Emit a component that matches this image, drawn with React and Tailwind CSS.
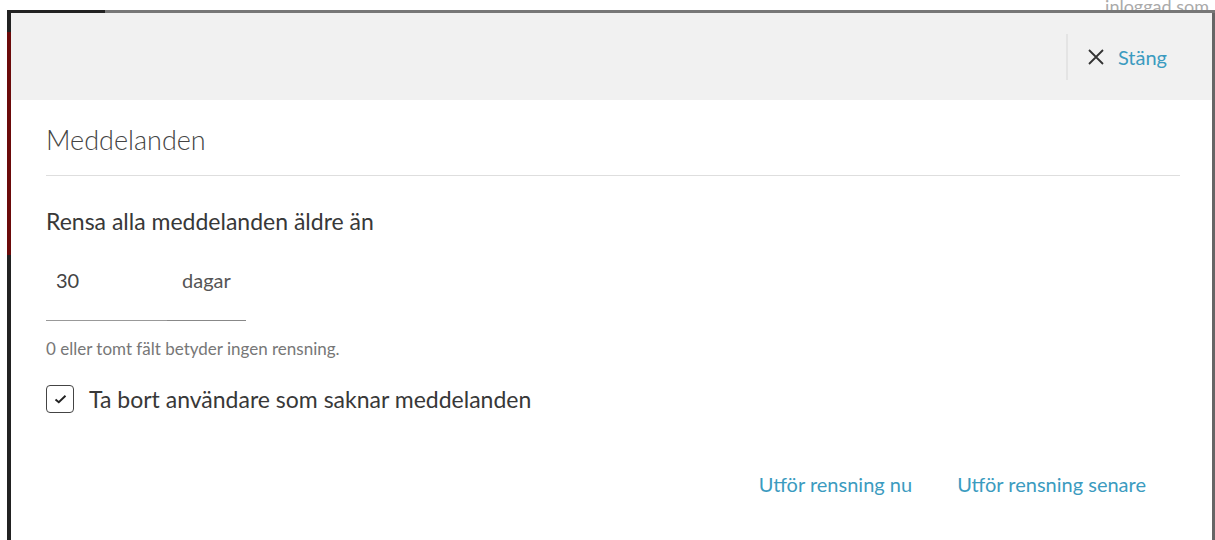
import { useState } from 'react';

// Blue used for the link-style buttons in the dialog
const LINK = 'text-[#3b9bc0]';

const CloseIcon = () => (
    <svg width="18" height="18" viewBox="0 0 18 18" className="text-[#333]">
        <path d="M2 2 L16 16 M16 2 L2 16" stroke="currentColor" strokeWidth="1.8" fill="none" />
    </svg>
);

const Checkbox = ({ checked, onChange }) => (
    <button
        type="button"
        onClick={onChange}
        className="w-[28px] h-[28px] rounded-[4px] border-[1.5px] border-[#444] flex items-center justify-center shrink-0"
    >
        {checked && (
            <svg width="13" height="10" viewBox="0 0 13 10">
                <path d="M1.5 5.5 L4.8 8.3 L11.5 1.8" stroke="#222" strokeWidth="1.9" fill="none" />
            </svg>
        )}
    </button>
);

const App = () => {
    const [days, setDays] = useState('30');
    const [removeUsers, setRemoveUsers] = useState(true);

    return (
        <div
            className="w-[1215px] h-[540px] overflow-hidden bg-white flex flex-col"
            style={{ fontFamily: 'Lato, "Noto Sans", sans-serif' }}
        >
            {/* page behind the dialog */}
            <div className="h-[10px] relative shrink-0 overflow-hidden">
                <span className="absolute right-[6px] top-[-5px] text-[18px] leading-[22px] text-[#aaa]">inloggad som</span>
            </div>
            <div className="h-[3px] flex shrink-0">
                <div className="w-[7px] bg-white" />
                <div className="w-[98px] bg-[#222]" />
                <div className="flex-1 bg-[#777]" />
            </div>

            <div className="flex flex-1 min-h-0">
                <div className="w-[7px] bg-white" />
                <div className="w-[4px] flex flex-col">
                    <div className="h-[19px] bg-[#222]" />
                    <div className="h-[223px] bg-[#6b0a0a]" />
                    <div className="flex-1 bg-[#222]" />
                </div>

                {/* dialog */}
                <div className="flex-1 flex flex-col bg-white">
                    <div className="h-[87px] bg-[#f1f1f1] flex items-center justify-end pr-[45px]">
                        <div className="w-[2px] h-[46px] bg-[#e4e4e4] mr-[19px]" />
                        <button type="button" className="flex items-center gap-[13px]">
                            <CloseIcon />
                            <span className={`text-[20px] leading-[28px] ${LINK}`}>Stäng</span>
                        </button>
                    </div>

                    <div className="pl-[35px] pr-[32px] pt-[25px]">
                        <h2 className="text-[27px] leading-[30px] text-[#444] font-light">
                            Meddelanden
                        </h2>
                        <div className="h-[1px] bg-[#dedede] mt-[20px]" />

                        <p className="mt-[30px] text-[23px] leading-[30px] text-[#383838]">
                            Rensa alla meddelanden äldre än
                        </p>

                        <div className="mt-[30px] flex">
                            <input
                                value={days}
                                onChange={(e) => setDays(e.target.value)}
                                className="w-[121px] h-[55px] pl-[10px] pb-[26px] text-[20px] leading-[28px] text-[#444] border-b border-[#999] outline-none bg-transparent"
                            />
                            <div className="w-[79px] h-[55px] pl-[15px] border-b border-[#888] text-[20px] leading-[28px] text-[#555]">
                                dagar
                            </div>
                        </div>
                        <p className="mt-[16px] text-[17px] leading-[24px] text-[#777]">
                            0 eller tomt fält betyder ingen rensning.
                        </p>

                        <label className="mt-[23px] h-[30px] flex items-center gap-[15px] cursor-pointer">
                            <Checkbox checked={removeUsers} onChange={() => setRemoveUsers(!removeUsers)} />
                            <span className="text-[23px] leading-[30px] text-[#383838]">Ta bort användare som saknar meddelanden</span>
                        </label>

                        <div className="mt-[56px] flex justify-end gap-[45px] pr-[34px]">
                            <button type="button" className={`text-[20px] leading-[28px] ${LINK}`}>Utför rensning nu</button>
                            <button type="button" className={`text-[20px] leading-[28px] ${LINK}`}>Utför rensning senare</button>
                        </div>
                    </div>
                </div>

                <div className="w-[3px] bg-[#666]" />
            </div>
        </div>
    );
};

export default App;
